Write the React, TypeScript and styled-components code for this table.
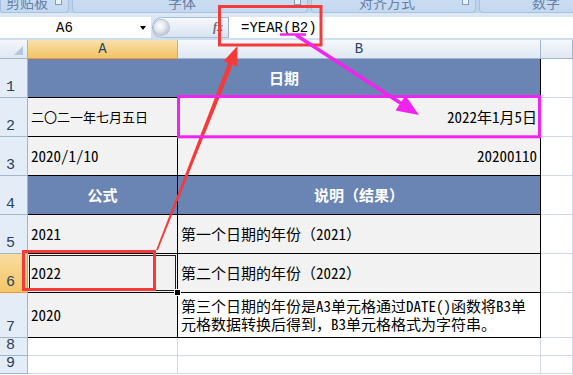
import { Fragment } from 'react'
import styled, { createGlobalStyle } from 'styled-components'

const GlobalStyle = createGlobalStyle`
    html, body {
        margin: 0;
        padding: 0;
        background: #ffffff;
    }
    body {
        font-family: 'Noto Sans CJK SC', sans-serif;
    }
`

const StyledWindow = styled.div`
    position: relative;
    width: 573px;
    height: 375px;
    overflow: hidden;
    display: flex;
    flex-direction: column;
    background: #ffffff;
`

// group captions of the ribbon, cut off by the window top
const StyledRibbon = styled.div`
    height: 13px;
    flex: none;
    display: flex;
    gap: 3px;
    background: #bdd2eb;
    overflow: hidden;
`

const StyledGroup = styled.div<{ $width: number; $pad: number }>`
    position: relative;
    flex: none;
    box-sizing: border-box;
    width: ${({ $width }) => $width}px;
    padding-left: ${({ $pad }) => $pad}px;
    background: linear-gradient(#cadcf1, #c4d8ef);
    border: 1px solid #a9c1df;
    border-top: none;
    border-radius: 0 0 4px 4px;
`

const StyledCaption = styled.div`
    margin-top: -5px;
    color: #6480ab;
    font-size: 14px;
    line-height: 14px;
    white-space: nowrap;
`

const StyledLauncher = styled.span`
    position: absolute;
    top: -2px;
    right: 6px;
    width: 5px;
    height: 5px;
    border: 1px solid #7f9cc4;
    background: #e9f1fa;
`

const StyledFormulaBar = styled.div`
    height: 27px;
    flex: none;
    box-sizing: border-box;
    padding: 4px 0 2px;
    display: flex;
    background: linear-gradient(#dde8f5, #cfdef0);
`

const StyledNameBox = styled.div`
    width: 151px;
    flex: none;
    display: flex;
    align-items: center;
    background: #ffffff;
`

const StyledNameText = styled.div`
    width: 129px;
    text-align: center;
    font-family: 'Liberation Mono', monospace;
    font-size: 14px;
    color: #000;
`

const StyledDropArrow = styled.span`
    margin-left: 11px;
    width: 0;
    height: 0;
    border-left: 3.5px solid transparent;
    border-right: 3.5px solid transparent;
    border-top: 4px solid #000;
`

const StyledFxPill = styled.div`
    width: 76px;
    flex: none;
    margin-left: 1px;
    box-sizing: border-box;
    display: flex;
    align-items: center;
    justify-content: space-between;
    padding: 0 5px 0 1px;
    background: linear-gradient(#f6f9fc, #d8e3f1);
    border: 1px solid #a7bddb;
    border-right: none;
    border-radius: 10px 0 0 10px;
`

const StyledKnob = styled.span`
    width: 15px;
    height: 15px;
    border-radius: 50%;
    background: radial-gradient(circle at 40% 40%, #ffffff 0%, #dfe4ea 45%, #9ba7b6 100%);
    box-shadow: 0 0 0 1px #b3c0d0;
`

const StyledFx = styled.span`
    font-family: 'Liberation Serif', serif;
    font-style: italic;
    font-weight: bold;
    font-size: 12px;
    color: #6c6c6c;
`

const StyledFormula = styled.div`
    flex: 1;
    display: flex;
    align-items: center;
    padding-left: 12px;
    background: #ffffff;
    border-left: 1px solid #9db5d3;
    font-family: 'Liberation Mono', monospace;
    font-size: 14px;
    color: #000;
`

const StyledSheet = styled.div`
    flex: 1;
    display: grid;
    grid-template-columns: 28px 150px 363px 1fr;
    grid-template-rows: 19px repeat(6, 39px) 45px 18px 18px 1fr;
    background: #ffffff;
    color: #27425e;
`

const StyledCorner = styled.div`
    display: flex;
    align-items: flex-end;
    justify-content: flex-end;
    padding: 0 4px 3px 0;
    background: linear-gradient(#f3f6fb, #dfe8f3);
    border-right: 1px solid #9eb6ce;
    border-bottom: 1px solid #9eb6ce;
`

const StyledCornerMark = styled.span`
    width: 0;
    height: 0;
    border-left: 9px solid transparent;
    border-bottom: 9px solid #b4c6de;
`

const StyledColHeader = styled.div<{ $selected?: boolean }>`
    display: flex;
    align-items: center;
    justify-content: center;
    font-family: 'Liberation Mono', monospace;
    font-size: 14px;
    background: ${({ $selected }) =>
        $selected
            ? 'linear-gradient(#f9e1ad, #f1c363)'
            : 'linear-gradient(#f5f8fc, #e0e8f3)'};
    border-right: 1px solid ${({ $selected }) => ($selected ? '#e9a94c' : '#9eb6ce')};
    border-bottom: 1px solid ${({ $selected }) => ($selected ? '#f29536' : '#9eb6ce')};
`

const StyledRowHeader = styled.div<{ $selected?: boolean }>`
    display: flex;
    align-items: flex-end;
    padding: 0 0 1px 6px;
    font-family: 'Liberation Mono', monospace;
    font-size: 15px;
    line-height: 16px;
    background: ${({ $selected }) =>
        $selected ? 'linear-gradient(#f9dca0, #f3c768)' : '#e4ecf7'};
    border-right: 1px solid ${({ $selected }) => ($selected ? '#f29536' : '#9eb6ce')};
    border-bottom: 1px solid ${({ $selected }) => ($selected ? '#f29536' : '#9eb6ce')};
`

type Kind = 'title' | 'value' | 'note' | 'blank' | 'margin'

const cellFill: Record<Kind, string> = {
    title: '#6a84b4',
    value: '#f2f2f2',
    note: '#ffffff',
    blank: '#ffffff',
    margin: '#ffffff',
}

const StyledCell = styled.div<{
    $kind: Kind
    $align?: 'left' | 'right' | 'center'
    $span?: number
    $size?: number
    $active?: boolean
}>`
    position: relative;
    grid-column: span ${({ $span }) => $span ?? 1};
    display: flex;
    align-items: center;
    justify-content: ${({ $align }) =>
        $align === 'right' ? 'flex-end' : $align === 'center' ? 'center' : 'flex-start'};
    padding: 0 3px;
    background: ${({ $kind }) => cellFill[$kind]};
    color: ${({ $kind }) => ($kind === 'title' ? '#ffffff' : '#000000')};
    font-family: ${({ $kind }) =>
        $kind === 'title'
            ? "'Noto Sans CJK SC', sans-serif"
            : "'Noto Sans Mono CJK SC', 'Noto Sans CJK SC', sans-serif"};
    font-weight: ${({ $kind }) => ($kind === 'title' ? 700 : 400)};
    font-size: ${({ $size }) => $size ?? 15}px;
    line-height: 18px;
    white-space: nowrap;
    border-right: 1px solid
        ${({ $kind }) => ($kind === 'blank' || $kind === 'margin' ? '#d0d7e5' : '#000000')};
    border-bottom: 1px solid
        ${({ $kind }) => ($kind === 'blank' || $kind === 'margin' ? '#d0d7e5' : '#000000')};
    box-shadow: ${({ $active }) =>
        $active ? 'inset 0 0 0 1px #f2f2f2, inset 0 0 0 2px #1c1c1c' : 'none'};
    z-index: ${({ $active }) => ($active ? 1 : 'auto')};
`

const StyledFillHandle = styled.span`
    position: absolute;
    right: -4px;
    bottom: -4px;
    width: 5px;
    height: 5px;
    background: #000;
    border: 1px solid #fff;
`

const StyledMarks = styled.svg`
    position: absolute;
    left: 0;
    top: 0;
    pointer-events: none;
    z-index: 5;
`

type CellSpec = {
    kind: Kind
    text?: string
    lines?: string[]
    align?: 'left' | 'right' | 'center'
    span?: number
    size?: number
    active?: boolean
}

const rows: { num: string; selected?: boolean; cells: CellSpec[] }[] = [
    { num: '1', cells: [{ kind: 'title', text: '日期', align: 'center', span: 2 }] },
    {
        num: '2',
        cells: [
            { kind: 'value', text: '二〇二一年七月五日', size: 13 },
            { kind: 'value', text: '2022年1月5日', align: 'right' },
        ],
    },
    {
        num: '3',
        cells: [
            { kind: 'value', text: '2020/1/10' },
            { kind: 'value', text: '20200110', align: 'right' },
        ],
    },
    {
        num: '4',
        cells: [
            { kind: 'title', text: '公式', align: 'center' },
            { kind: 'title', text: '说明（结果）', align: 'center' },
        ],
    },
    {
        num: '5',
        cells: [
            { kind: 'value', text: '2021' },
            { kind: 'value', text: '第一个日期的年份（2021）' },
        ],
    },
    {
        num: '6',
        selected: true,
        cells: [
            { kind: 'value', text: '2022', active: true },
            { kind: 'value', text: '第二个日期的年份（2022）' },
        ],
    },
    {
        num: '7',
        cells: [
            { kind: 'value', text: '2020' },
            {
                kind: 'note',
                lines: [
                    '第三个日期的年份是A3单元格通过DATE()函数将B3单',
                    '元格数据转换后得到，B3单元格格式为字符串。',
                ],
            },
        ],
    },
    { num: '8', cells: [{ kind: 'blank' }, { kind: 'blank' }] },
    { num: '9', cells: [{ kind: 'blank' }, { kind: 'blank' }] },
]

const ribbonGroups = [
    { label: '剪贴板', width: 69, pad: 5 },
    { label: '字体', width: 236, pad: 95 },
    { label: '对齐方式', width: 165, pad: 47 },
    { label: '数字', width: 120, pad: 52 },
]

export default function App() {
    return (
        <>
            <GlobalStyle />
            <StyledWindow>
                <StyledRibbon>
                    {ribbonGroups.map((group) => (
                        <StyledGroup key={group.label} $width={group.width} $pad={group.pad}>
                            <StyledCaption>{group.label}</StyledCaption>
                            <StyledLauncher />
                        </StyledGroup>
                    ))}
                </StyledRibbon>

                <StyledFormulaBar>
                    <StyledNameBox>
                        <StyledNameText>A6</StyledNameText>
                        <StyledDropArrow />
                    </StyledNameBox>
                    <StyledFxPill>
                        <StyledKnob />
                        <StyledFx>fx</StyledFx>
                    </StyledFxPill>
                    <StyledFormula>=YEAR(B2)</StyledFormula>
                </StyledFormulaBar>

                <StyledSheet>
                    <StyledCorner>
                        <StyledCornerMark />
                    </StyledCorner>
                    <StyledColHeader $selected>A</StyledColHeader>
                    <StyledColHeader>B</StyledColHeader>
                    <StyledColHeader />

                    {rows.map((row) => (
                        <Fragment key={row.num}>
                            <StyledRowHeader $selected={row.selected}>{row.num}</StyledRowHeader>
                            {row.cells.map((cell, i) => (
                                <StyledCell
                                    key={i}
                                    $kind={cell.kind}
                                    $align={cell.align}
                                    $span={cell.span}
                                    $size={cell.size}
                                    $active={cell.active}
                                >
                                    {cell.lines ? (
                                        <div>
                                            {cell.lines.map((line) => (
                                                <div key={line}>{line}</div>
                                            ))}
                                        </div>
                                    ) : (
                                        cell.text
                                    )}
                                    {cell.active && <StyledFillHandle />}
                                </StyledCell>
                            ))}
                            <StyledCell $kind="margin" />
                        </Fragment>
                    ))}
                </StyledSheet>

                <StyledMarks width="573" height="375" viewBox="0 0 573 375">
                    {/* red: selected cell to formula */}
                    <rect x="219.5" y="6.5" width="101.5" height="38.5" fill="none" stroke="#f53a3a" strokeWidth="3" />
                    <rect x="23.5" y="251.5" width="131" height="38" fill="none" stroke="#f53a3a" strokeWidth="3" />
                    <polygon
                        points="156.2,249.7 228.3,62.9 223.6,61 237.5,46 237.3,66.4 232.8,64.6 157.8,250.3"
                        fill="#f53a3a"
                    />
                    {/* magenta: referenced cell */}
                    <rect x="178.5" y="96.5" width="361" height="40.3" fill="none" stroke="#f024ef" strokeWidth="3" />
                    <line x1="280" y1="34.5" x2="306" y2="34.5" stroke="#f024ef" strokeWidth="2.5" />
                    <line x1="296" y1="35" x2="402" y2="104" stroke="#f024ef" strokeWidth="3.5" />
                    <polygon points="395.5,110.5 419,115 405.5,95.5" fill="#f024ef" />
                </StyledMarks>
            </StyledWindow>
        </>
    )
}
